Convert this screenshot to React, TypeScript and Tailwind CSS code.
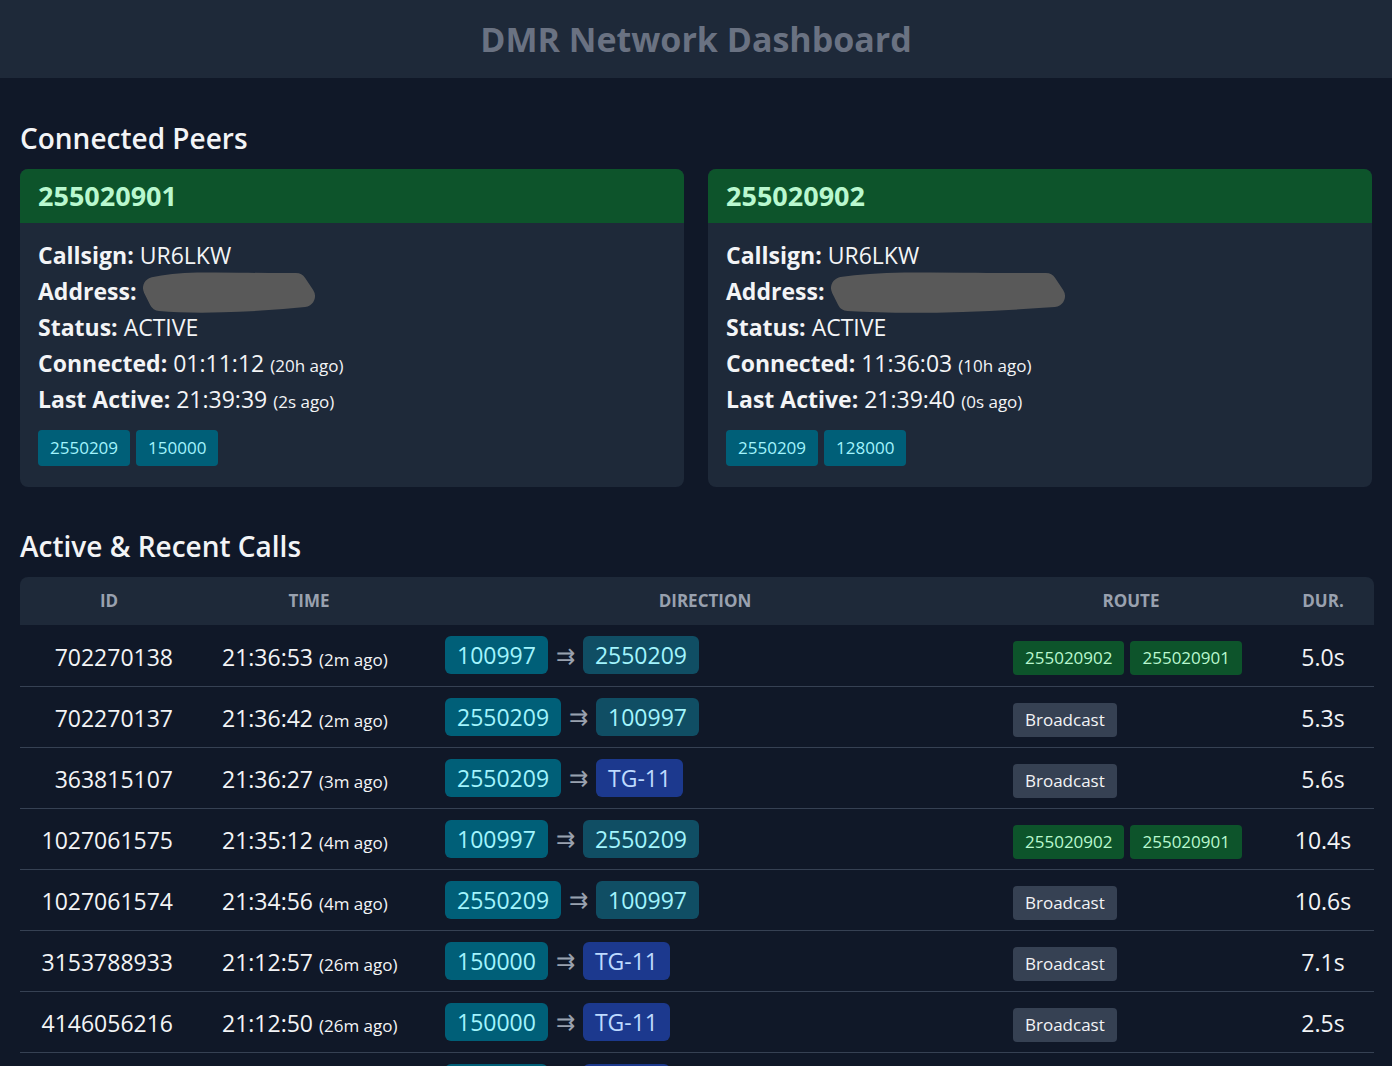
import * as React from 'react';

interface Peer {
  id: string;
  callsign: string;
  status: string;
  connected: string;
  connectedAgo: string;
  lastActive: string;
  lastActiveAgo: string;
  talkgroups: string[];
  blobWidth: number;
}

interface Call {
  id: string;
  time: string;
  ago: string;
  from: string;
  to: string;
  route: string[] | null;
  duration: string;
}

const peers: Peer[] = [
  {
    id: '255020901',
    callsign: 'UR6LKW',
    status: 'ACTIVE',
    connected: '01:11:12',
    connectedAgo: '20h ago',
    lastActive: '21:39:39',
    lastActiveAgo: '2s ago',
    talkgroups: ['2550209', '150000'],
    blobWidth: 180,
  },
  {
    id: '255020902',
    callsign: 'UR6LKW',
    status: 'ACTIVE',
    connected: '11:36:03',
    connectedAgo: '10h ago',
    lastActive: '21:39:40',
    lastActiveAgo: '0s ago',
    talkgroups: ['2550209', '128000'],
    blobWidth: 242,
  },
];

const both = ['255020902', '255020901'];

const calls: Call[] = [
  { id: '702270138', time: '21:36:53', ago: '2m ago', from: '100997', to: '2550209', route: both, duration: '5.0s' },
  { id: '702270137', time: '21:36:42', ago: '2m ago', from: '2550209', to: '100997', route: null, duration: '5.3s' },
  { id: '363815107', time: '21:36:27', ago: '3m ago', from: '2550209', to: 'TG-11', route: null, duration: '5.6s' },
  { id: '1027061575', time: '21:35:12', ago: '4m ago', from: '100997', to: '2550209', route: both, duration: '10.4s' },
  { id: '1027061574', time: '21:34:56', ago: '4m ago', from: '2550209', to: '100997', route: null, duration: '10.6s' },
  { id: '3153788933', time: '21:12:57', ago: '26m ago', from: '150000', to: 'TG-11', route: null, duration: '7.1s' },
  { id: '4146056216', time: '21:12:50', ago: '26m ago', from: '150000', to: 'TG-11', route: null, duration: '2.5s' },
  { id: '4146056215', time: '21:12:41', ago: '27m ago', from: '150000', to: 'TG-11', route: null, duration: '3.2s' },
];

// grey scribble that hides the peer's IP address
function Redacted({ width }: { width: number }) {
  const w = width;
  return (
    <svg width={w} height={46} viewBox={`0 0 ${w} 46`} className="inline-block align-middle -my-3 -ml-1">
      <path
        d={`M16 17 C ${w * 0.3} 9, ${w * 0.6} 14, ${w - 22} 13 L ${w - 14} 25 C ${w * 0.6} 31, ${w * 0.3} 32, 22 29 Z`}
        fill="#595959"
        stroke="#595959"
        strokeWidth={22}
        strokeLinejoin="round"
      />
    </svg>
  );
}

function PeerCard({ peer }: { peer: Peer }) {
  return (
    <div className="bg-gray-800 rounded-lg overflow-hidden">
      <div className="bg-green-900 px-[18px] py-[11px]">
        <h3 className="text-[27px] leading-8 font-bold text-green-200">{peer.id}</h3>
      </div>
      <div className="px-[18px] pt-[14px] pb-[21px] text-[23px] leading-9 text-gray-100">
        <div>
          <span className="font-bold">Callsign:</span> {peer.callsign}
        </div>
        <div>
          <span className="font-bold">Address:</span> <Redacted width={peer.blobWidth} />
        </div>
        <div>
          <span className="font-bold">Status:</span> {peer.status}
        </div>
        <div>
          <span className="font-bold">Connected:</span> {peer.connected}{' '}
          <span className="text-[17px] leading-none">({peer.connectedAgo})</span>
        </div>
        <div>
          <span className="font-bold">Last Active:</span> {peer.lastActive}{' '}
          <span className="text-[17px] leading-none">({peer.lastActiveAgo})</span>
        </div>
        <div className="flex gap-1.5 mt-[13px]">
          {peer.talkgroups.map((tg) => (
            <span key={tg} className="bg-cyan-800 text-cyan-200 text-[17px] leading-9 px-3 rounded">
              {tg}
            </span>
          ))}
        </div>
      </div>
    </div>
  );
}

function Target({ value, source }: { value: string; source?: boolean }) {
  if (value.startsWith('TG-')) {
    return <span className="bg-blue-900 text-blue-200 px-3 rounded-md leading-[38px]">{value}</span>;
  }
  return (
    <span className={`${source ? 'bg-cyan-800' : 'bg-cyan-900'} text-cyan-200 px-3 rounded-md leading-[38px]`}>
      {value}
    </span>
  );
}

export default function App() {
  return (
    <div className="min-h-screen bg-gray-900 text-gray-100" style={{ fontFamily: '"Open Sans", "Noto Sans", sans-serif' }}>
      {/* Header */}
      <header className="bg-gray-800 h-[78px] flex items-center justify-center">
        <h1 className="text-[34px] font-bold text-gray-500">DMR Network Dashboard</h1>
      </header>

      <main className="px-5">
        <h2 className="text-[28px] leading-9 font-semibold mt-[42px] mb-[13px]">Connected Peers</h2>
        <div className="grid grid-cols-2 gap-6">
          {peers.map((peer) => (
            <PeerCard key={peer.id} peer={peer} />
          ))}
        </div>

        <h2 className="text-[28px] leading-9 font-semibold mt-[41px] mb-[13px]">Active &amp; Recent Calls</h2>
        <table className="w-full table-fixed border-collapse">
          <colgroup>
            <col className="w-[178px]" />
            <col className="w-[222px]" />
            <col className="w-[570px]" />
            <col className="w-[282px]" />
            <col className="w-[102px]" />
          </colgroup>
          <thead className="bg-gray-800">
            <tr className="h-12 text-[17px] font-bold text-gray-400 uppercase">
              <th className="rounded-tl-lg">ID</th>
              <th>Time</th>
              <th>Direction</th>
              <th>Route</th>
              <th className="rounded-tr-lg">Dur.</th>
            </tr>
          </thead>
          <tbody className="text-[23px]">
            {calls.map((call) => (
              <tr key={call.id} className="h-[61px] border-b border-gray-700">
                <td className="text-right pr-[25px] pt-1">{call.id}</td>
                <td className="pl-6 pt-1 whitespace-nowrap">
                  {call.time} <span className="text-[17px]">({call.ago})</span>
                </td>
                <td className="pl-[25px]">
                  <div className="flex items-center gap-2">
                    <Target value={call.from} source />
                    <span className="text-gray-400">⇉</span>
                    <Target value={call.to} />
                  </div>
                </td>
                <td className="pl-[23px]">
                  <div className="flex gap-1.5 pt-[6px] text-[17px] leading-[34px]">
                    {call.route ? (
                      call.route.map((r) => (
                        <span key={r} className="bg-green-900 text-green-200 px-3 rounded">
                          {r}
                        </span>
                      ))
                    ) : (
                      <span className="bg-gray-700 text-gray-100 px-3 rounded">Broadcast</span>
                    )}
                  </div>
                </td>
                <td className="text-center pt-1">{call.duration}</td>
              </tr>
            ))}
          </tbody>
        </table>
      </main>
    </div>
  );
}
